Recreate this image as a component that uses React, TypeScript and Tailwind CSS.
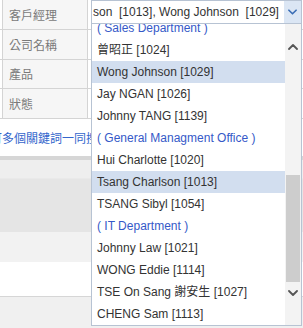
import React from "react";

const items: { t: string; h?: boolean; sel?: boolean }[] = [
  { t: "( Sales Department )", h: true },
  { t: "曾昭正 [1024]" },
  { t: "Wong Johnson [1029]", sel: true },
  { t: "Jay NGAN [1026]" },
  { t: "Johnny TANG [1139]" },
  { t: "( General Managment Office )", h: true },
  { t: "Hui Charlotte [1020]" },
  { t: "Tsang Charlson [1013]", sel: true },
  { t: "TSANG Sibyl [1054]" },
  { t: "( IT Department )", h: true },
  { t: "Johnny Law [1021]" },
  { t: "WONG Eddie [1114]" },
  { t: "TSE On Sang 謝安生 [1027]" },
  { t: "CHENG Sam [1113]" },
];

const labels: { t: string; h: string }[] = [
  { t: "客戶經理", h: "h-[30px]" },
  { t: "公司名稱", h: "h-[30px]" },
  { t: "產品", h: "h-[29px]" },
  { t: "狀態", h: "h-[30px]" },
];

function Chevron({ up, color, w = 10, h = 6 }: { up?: boolean; color: string; w?: number; h?: number }) {
  return (
    <svg width={w} height={h} viewBox="0 0 10 6" fill="none">
      <polyline
        points={up ? "1,5 5,1 9,5" : "1,1 5,5 9,1"}
        stroke={color}
        strokeWidth="1.8"
        strokeLinecap="round"
        strokeLinejoin="round"
      />
    </svg>
  );
}

export default function App() {
  return (
    <div className="relative w-[303px] h-[328px] overflow-hidden bg-white font-['Liberation_Sans','Noto_Sans_CJK_TC',sans-serif]">
      {/* background page */}
      <div className="flex flex-col">
        <div className="flex flex-col">
          {labels.map((l) => (
            <div key={l.t} className={`flex ${l.h} border-b border-[#d4d4d4]`}>
              <div className="ml-[2px] w-[86px] flex items-center pl-[6px] bg-[#f6f6f6] border-l border-r border-[#d4d4d4] text-[12px] text-[#7a7a7a] font-['Noto_Sans_CJK_TC',sans-serif]">
                {l.t}
              </div>
              <div className="flex-1 bg-white" />
            </div>
          ))}
        </div>
        <div className="h-[37px] flex items-center overflow-hidden whitespace-nowrap">
          <span className="ml-[-10px] text-[12px] text-[#3366cc] font-['Noto_Sans_CJK_TC',sans-serif]">
            可多個關鍵詞一同搜尋
          </span>
        </div>
        <div className="h-[4px] bg-[#d6d6d6]" />
        <div className="h-[18px] bg-[#eeeeee]" />
        <div className="h-[54px] bg-[#e5e5e5] border-t border-[#e9e9e9]" />
        <div className="h-[30px] bg-[#f2f2f2]" />
        <div className="h-[34px] bg-white" />
        <div className="h-[1px] bg-[#d6d6d6]" />
        <div className="h-[31px] bg-[#f0f0f0]" />
      </div>

      {/* dropdown overlay */}
      <div className="absolute left-[91px] top-0 w-[211px] h-[326px] flex flex-col">
        <div className="relative z-10 h-[24px] flex border border-[#b7c3d3] bg-white">
          <div className="flex-1 overflow-hidden whitespace-pre pl-[1px] text-[12px] leading-[22px] text-[#333]">
            {"son  [1013], Wong Johnson  [1029]"}
          </div>
          <div className="w-[17px] bg-[#dbe6f4] flex items-center justify-center">
            <Chevron color="#3a6db5" w={9} h={6} />
          </div>
        </div>
        <div className="flex-1 flex border-x border-b border-[#b7c3d3] bg-white overflow-hidden">
          <div className="flex-1 overflow-hidden">
            <div className="mt-[-7px] flex flex-col">
              {items.map((it) => (
                <div
                  key={it.t}
                  className={`h-[22px] leading-[22px] pl-[5px] whitespace-nowrap text-[12px] ${
                    it.sel ? "bg-[#d2deef]" : ""
                  } ${it.h ? "text-[#3559c8]" : "text-[#333]"}`}
                >
                  {it.t}
                </div>
              ))}
            </div>
          </div>
          <div className="w-[16px] flex flex-col bg-[#f3f3f3]">
            <div className="h-[46px] flex items-center justify-center">
              <Chevron up color="#555" />
            </div>
            <div className="h-[105px]" />
            <div className="h-[107px] mx-[1px] bg-[#cdcdcd]" />
            <div className="h-[22px] flex items-center justify-center">
              <Chevron color="#555" />
            </div>
            <div className="flex-1" />
          </div>
        </div>
      </div>
    </div>
  );
}
